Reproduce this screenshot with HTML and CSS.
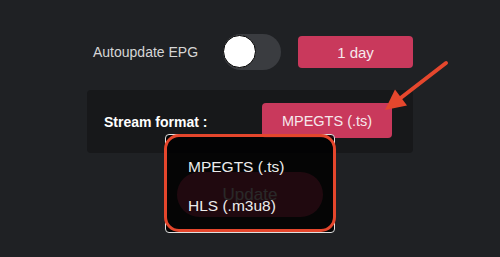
FILE: index.html
```html
<!DOCTYPE html>
<html>
<head>
<meta charset="utf-8">
<link rel="stylesheet" href="styles.css">
</head>
<body>
<div class="screen">
  <div class="row">
    <span class="row-label">Autoupdate EPG</span>
    <span class="toggle"><span class="knob"></span></span>
    <span class="btn btn-day">1 day</span>
  </div>
  <div class="panel">
    <span class="panel-label">Stream format :</span>
    <span class="btn btn-format">MPEGTS (.ts)</span>
  </div>
  <div class="update">Update</div>

  <div class="dropdown">
    <div class="option">MPEGTS (.ts)</div>
    <div class="option">HLS (.m3u8)</div>
    <div class="callout"></div>
  </div>

  <svg class="arrow" width="500" height="257" viewBox="0 0 500 257">
    <line x1="446" y1="63" x2="400" y2="98.5" stroke="#e5472d" stroke-width="4" stroke-linecap="round"/>
    <polygon points="385,110 407,105.5 395,89.5" fill="#e5472d"/>
  </svg>
</div>
</body>
</html>
```

FILE: styles.css
```css
html, body {
  margin: 0;
  padding: 0;
  background: #1f2124;
}

.screen {
  position: relative;
  width: 500px;
  height: 257px;
  overflow: hidden;
  background: #1f2124;
  font-family: "Liberation Sans", Arial, sans-serif;
  padding-top: 34px;
  box-sizing: border-box;
}

.row {
  display: flex;
  align-items: center;
  height: 36px;
  margin-left: 93px;
}

.row-label {
  font-size: 14px;
  color: #d6d6d6;
  width: 130px;
}

.toggle {
  position: relative;
  width: 58px;
  height: 36px;
  border-radius: 18px;
  background: #3a3c40;
  margin-right: 17px;
}

.knob {
  position: absolute;
  left: 0;
  top: 1px;
  width: 31px;
  height: 31px;
  border-radius: 50%;
  background: #ffffff;
  border: 1.5px solid #000;
}

.btn {
  display: flex;
  align-items: center;
  justify-content: center;
  background: #c9395c;
  color: #f6e8ec;
  border-radius: 4px;
  box-sizing: border-box;
}

.btn-day {
  width: 115px;
  height: 32px;
  font-size: 15px;
}

.panel {
  display: flex;
  align-items: center;
  margin-top: 20px;
  margin-left: 87px;
  width: 326px;
  height: 63px;
  padding-left: 17px;
  box-sizing: border-box;
  background: #17181a;
  border-radius: 4px;
}

.panel-label {
  width: 158px;
  font-size: 14px;
  font-weight: bold;
  color: #ffffff;
}

.btn-format {
  width: 130px;
  height: 35px;
  font-size: 14.5px;
  margin-top: -2px;
}

.update {
  margin-top: 19px;
  margin-left: 177px;
  width: 146px;
  height: 45px;
  border-radius: 23px;
  background: #c9395c;
  color: #ffffff;
  font-size: 17px;
  display: flex;
  align-items: center;
  justify-content: center;
}

.dropdown {
  position: absolute;
  left: 165px;
  top: 134px;
  width: 170px;
  height: 99px;
  box-sizing: border-box;
  border: 1px solid #e0e0e0;
  border-radius: 4px;
  background: rgba(0, 0, 0, 0.84);
  padding-top: 20px;
  padding-left: 22px;
}

.option {
  font-size: 15.5px;
  color: #ececec;
  height: 39px;
  line-height: 24px;
}

.callout {
  position: absolute;
  left: -2px;
  top: -1px;
  right: -2px;
  bottom: 0px;
  border: 3.5px solid #e5462c;
  border-radius: 15px;
  background: transparent;
}

.arrow {
  position: absolute;
  left: 0;
  top: 0;
  pointer-events: none;
}
```
